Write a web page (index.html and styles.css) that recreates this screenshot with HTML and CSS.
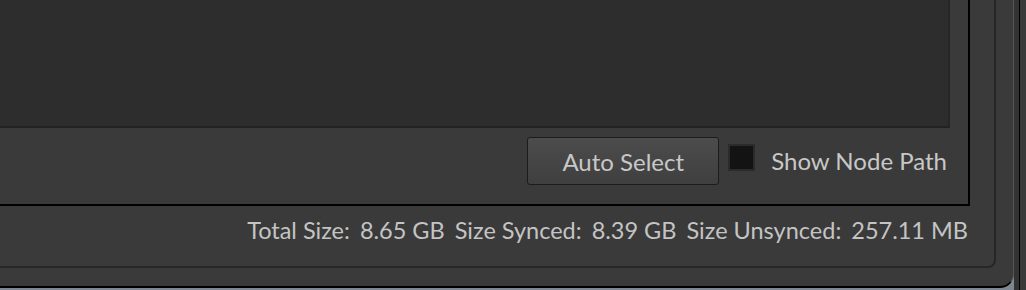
FILE: index.html
```html
<!DOCTYPE html>
<html lang="en">
<head>
    <meta charset="UTF-8">
    <title>Sync Panel</title>
    <link rel="stylesheet" href="styles.css">
</head>
<body>

    <div class="screen">
        <!-- Main window -->
        <div class="window">
            <div class="panel">
                <div class="group">
                    <div class="node-list"></div>
                    <div class="options-row">
                        <button class="auto-btn">Auto Select</button>
                        <span class="check-box"></span>
                        <span class="check-label">Show Node Path</span>
                    </div>
                </div>
                <div class="status-row">
                    <span>Total Size:</span>
                    <span>8.65 GB</span>
                    <span>Size Synced:</span>
                    <span>8.39 GB</span>
                    <span>Size Unsynced:</span>
                    <span>257.11 MB</span>
                </div>
            </div>
        </div>
        <!-- Window behind -->
        <div class="side-strip"></div>
    </div>

</body>
</html>
```

FILE: styles.css
```css
body {
    margin: 0;
    padding: 0;
    background-color: #7d8793;
    font-family: Lato, "Open Sans", sans-serif;
    overflow: hidden;
}

.screen {
    display: flex;
    width: 1026px;
    height: 290px;
}

.window {
    width: 1014px;
    height: 288px;
    flex: none;
    padding: 0 17px 18px 0;
    box-sizing: border-box;
    background-color: #3a3a3a;
    border-right: 1px solid #555;
    border-bottom: 2px solid #000;
    border-bottom-right-radius: 14px;
    display: flex;
    flex-direction: column;
}

.side-strip {
    width: 12px;
    height: 290px;
    flex: none;
    background: linear-gradient(to right, #333 0, #333 5px, #000 5px, #000 6px, #3a3a3a 6px);
}

.panel {
    flex: 1;
    padding-right: 24px;
    border-right: 2px solid #272727;
    border-bottom: 2px solid #272727;
    border-bottom-right-radius: 8px;
    display: flex;
    flex-direction: column;
}

.group {
    height: 206px;
    box-sizing: border-box;
    border-right: 2px solid #000;
    border-bottom: 2px solid #000;
    display: flex;
    flex-direction: column;
}

.node-list {
    height: 126px;
    margin-right: 18px;
    background-color: #2d2d2d;
    border-right: 2px solid #262626;
    border-bottom: 2px solid #222;
}

.options-row {
    flex: 1;
    display: flex;
    justify-content: flex-end;
    align-items: flex-start;
    padding: 9px 21px 0 0;
}

.auto-btn {
    width: 192px;
    height: 48px;
    border: 1px solid #1c1c1c;
    border-radius: 3px;
    background: linear-gradient(#4c4c4c, #3f3f3f);
    color: #c8c8c8;
    font-family: inherit;
    font-size: 24px;
    padding: 0;
}

.check-box {
    width: 27px;
    height: 27px;
    box-sizing: border-box;
    margin: 7px 0 0 9px;
    background-color: #131313;
    border: 2px solid #2b2b2b;
}

.check-label {
    margin-left: 16px;
    line-height: 48px;
    font-size: 24px;
    color: #c8c8c8;
}

.status-row {
    flex: 1;
    display: flex;
    justify-content: flex-end;
    align-items: center;
    gap: 10px;
    padding: 0 2px 12px 0;
    font-size: 23.5px;
    color: #c4c4c4;
}
```
